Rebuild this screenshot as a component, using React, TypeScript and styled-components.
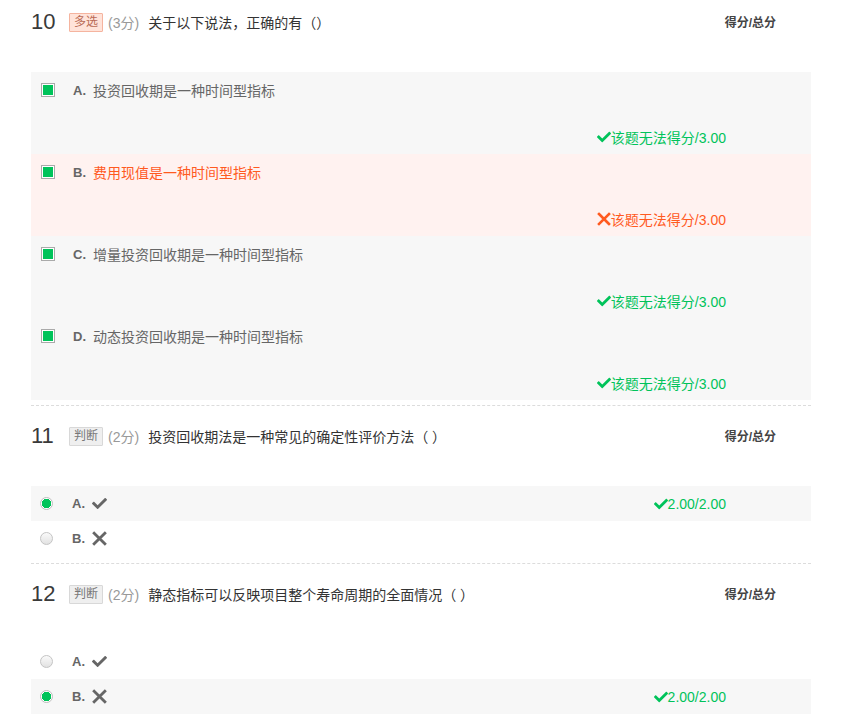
import styled, { createGlobalStyle } from "styled-components";
import { FaCheck } from "react-icons/fa";

const GREEN = "#00c35a";
const RED = "#ff5a1f";

type Mark = "right" | "wrong";

interface ChoiceOption {
  key: string;
  text: string;
  checked: boolean;
  mark: Mark;
  score: string;
}

interface JudgeOption {
  key: string;
  value: Mark;
  checked: boolean;
  score?: string;
}

const multiOptions: ChoiceOption[] = [
  { key: "A", text: "投资回收期是一种时间型指标", checked: true, mark: "right", score: "该题无法得分/3.00" },
  { key: "B", text: "费用现值是一种时间型指标", checked: true, mark: "wrong", score: "该题无法得分/3.00" },
  { key: "C", text: "增量投资回收期是一种时间型指标", checked: true, mark: "right", score: "该题无法得分/3.00" },
  { key: "D", text: "动态投资回收期是一种时间型指标", checked: true, mark: "right", score: "该题无法得分/3.00" },
];

const judgeQuestions = [
  {
    no: 11,
    title: "投资回收期法是一种常见的确定性评价方法（ ）",
    options: [
      { key: "A", value: "right", checked: true, score: "2.00/2.00" },
      { key: "B", value: "wrong", checked: false },
    ] as JudgeOption[],
  },
  {
    no: 12,
    title: "静态指标可以反映项目整个寿命周期的全面情况（ ）",
    options: [
      { key: "A", value: "right", checked: false },
      { key: "B", value: "wrong", checked: true, score: "2.00/2.00" },
    ] as JudgeOption[],
  },
];

const GlobalStyle = createGlobalStyle`
  body {
    margin: 0;
    background: #fff;
    font-family: "Liberation Sans", "Noto Sans CJK SC", sans-serif;
    color: #333;
  }
`;

const Page = styled.div`
  width: 780px;
  padding: 10px 0 0 31px;
`;

const Question = styled.section<{ $first?: boolean }>`
  padding: ${(p) => (p.$first ? "0 0 5px" : "18px 0 7px")};
  border-bottom: 1px dashed #dcdcdc;
`;

const Header = styled.div`
  display: flex;
  align-items: center;
  height: 24px;
  margin-bottom: 38px;
`;

const Number = styled.span`
  width: 38px;
  font-size: 22px;
  line-height: 24px;
  color: #3a3a3a;
`;

const Tag = styled.span<{ $kind: "multi" | "judge" }>`
  display: inline-block;
  box-sizing: border-box;
  height: 19px;
  padding: 0 4px;
  font-size: 12px;
  line-height: 17px;
  border: 1px solid ${(p) => (p.$kind === "multi" ? "#f5b49f" : "#d8d8d8")};
  background: ${(p) => (p.$kind === "multi" ? "#ffe3d9" : "#efefef")};
  color: ${(p) => (p.$kind === "multi" ? "#b86a55" : "#777")};
  border-radius: 1px;
`;

const Points = styled.span`
  margin-left: 5px;
  font-size: 14px;
  color: #999;
`;

const Title = styled.span`
  margin-left: 9px;
  font-size: 14px;
  color: #333;
  flex: 1;
`;

const ScoreHead = styled.span`
  margin-right: 35px;
  margin-bottom: 2px;
  font-size: 12px;
  font-weight: bold;
  color: #444;
`;

const ChoiceRow = styled.div<{ $wrong?: boolean }>`
  display: flex;
  flex-direction: column;
  height: 82px;
  box-sizing: border-box;
  padding: 8px 0 7px;
  background: ${(p) => (p.$wrong ? "#fff2f0" : "#f7f7f7")};
`;

const Line = styled.div`
  display: flex;
  align-items: center;
  height: 20px;
`;

const Checkbox = styled.span`
  box-sizing: border-box;
  width: 14px;
  height: 14px;
  margin-left: 10px;
  border: 1px solid #aaa;
  padding: 1px;
  background: #fff;
  &::after {
    content: "";
    display: block;
    width: 100%;
    height: 100%;
    background: ${GREEN};
  }
`;

const Letter = styled.span`
  margin-left: 18px;
  width: 20px;
  font-size: 13px;
  font-weight: bold;
  color: #666;
`;

const OptionText = styled.span<{ $wrong?: boolean }>`
  font-size: 14px;
  color: ${(p) => (p.$wrong ? RED : "#666")};
`;

const Score = styled.div<{ $mark: Mark }>`
  display: flex;
  align-items: center;
  justify-content: flex-end;
  margin-top: auto;
  padding-right: 85px;
  height: 20px;
  font-size: 14px;
  color: ${(p) => (p.$mark === "right" ? GREEN : RED)};
  svg {
    width: 14px;
    height: 14px;
  }
`;

const JudgeRow = styled.div<{ $shaded?: boolean }>`
  display: flex;
  align-items: center;
  height: 35px;
  background: ${(p) => (p.$shaded ? "#f7f7f7" : "transparent")};
`;

const Radio = styled.span<{ $on?: boolean }>`
  box-sizing: border-box;
  width: 13px;
  height: 13px;
  margin-left: 9px;
  margin-right: 1px;
  border-radius: 50%;
  border: 1px solid ${(p) => (p.$on ? "#bdbdbd" : "#c4c4c4")};
  background: ${(p) =>
    p.$on
      ? `radial-gradient(circle, ${GREEN} 0 4.5px, #fff 5px)`
      : "linear-gradient(#fafafa, #e2e2e2)"};
`;

const JudgeIcon = styled.span`
  display: flex;
  color: #666;
  svg {
    width: 15px;
    height: 15px;
  }
`;

const InlineScore = styled(Score)`
  margin-top: 0;
  margin-left: auto;
`;

const Cross = () => (
  <svg viewBox="0 0 14 14">
    <path
      d="M2 2L12 12M12 2L2 12"
      stroke="currentColor"
      strokeWidth="2.6"
      strokeLinecap="square"
      fill="none"
    />
  </svg>
);

const MarkIcon = ({ mark }: { mark: Mark }) =>
  mark === "right" ? <FaCheck /> : <Cross />;

export default function App() {
  return (
    <Page>
      <GlobalStyle />
      <Question $first>
        <Header>
          <Number>10</Number>
          <Tag $kind="multi">多选</Tag>
          <Points>(3分)</Points>
          <Title>关于以下说法，正确的有（）</Title>
          <ScoreHead>得分/总分</ScoreHead>
        </Header>
        {multiOptions.map((o) => (
          <ChoiceRow key={o.key} $wrong={o.mark === "wrong"}>
            <Line>
              {o.checked && <Checkbox />}
              <Letter>{o.key}.</Letter>
              <OptionText $wrong={o.mark === "wrong"}>{o.text}</OptionText>
            </Line>
            <Score $mark={o.mark}>
              <MarkIcon mark={o.mark} />
              {o.score}
            </Score>
          </ChoiceRow>
        ))}
      </Question>
      {judgeQuestions.map((q) => (
        <Question key={q.no}>
          <Header>
            <Number>{q.no}</Number>
            <Tag $kind="judge">判断</Tag>
            <Points>(2分)</Points>
            <Title>{q.title}</Title>
            <ScoreHead>得分/总分</ScoreHead>
          </Header>
          {q.options.map((o) => (
            <JudgeRow key={o.key} $shaded={o.checked}>
              <Radio $on={o.checked} />
              <Letter>{o.key}.</Letter>
              <JudgeIcon>
                <MarkIcon mark={o.value} />
              </JudgeIcon>
              {o.score && (
                <InlineScore $mark="right">
                  <FaCheck />
                  {o.score}
                </InlineScore>
              )}
            </JudgeRow>
          ))}
        </Question>
      ))}
    </Page>
  );
}
